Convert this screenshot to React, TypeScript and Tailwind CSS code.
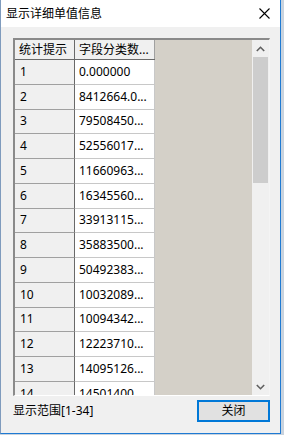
import React from "react";

const rows: [string, string][] = [
  ["1", "0.000000"],
  ["2", "8412664.0..."],
  ["3", "79508450..."],
  ["4", "52556017..."],
  ["5", "11660963..."],
  ["6", "16345560..."],
  ["7", "33913115..."],
  ["8", "35883500..."],
  ["9", "50492383..."],
  ["10", "10032089..."],
  ["11", "10094342..."],
  ["12", "12223710..."],
  ["13", "14095126..."],
  ["14", "14501400..."],
];

export default function App() {
  return (
    <div
      className="w-[284px] h-[435px] bg-[#c9d3de] overflow-hidden text-[12px] text-black"
      style={{ fontFamily: "'Noto Sans', 'Noto Sans CJK SC', sans-serif" }}
    >
      <div className="w-[281px] h-[434px] flex flex-col border-l border-l-[#7f9bbd] border-r border-r-[#1f7ad3] border-b border-b-[#1f7ad3] bg-[#f0f0f0]">
        {/* Title bar */}
        <div className="h-[27px] bg-white flex items-center justify-between pl-[5px] pr-[9px] shrink-0">
          <span className="leading-none">显示详细单值信息</span>
          <svg width="11" height="11" viewBox="0 0 11 11" className="mr-[1px]">
            <path d="M0.5 0.5 L10.5 10.5 M10.5 0.5 L0.5 10.5" stroke="#000" strokeWidth="1.1" />
          </svg>
        </div>
        {/* Body */}
        <div className="flex flex-col pl-[12px] pt-[11px]">
          <div className="w-[257px] h-[358px] flex border-t-2 border-l-2 border-t-[#8a8a8a] border-l-[#8a8a8a] border-r border-b border-r-[#f4f4f4] border-b-[#ffffff] overflow-hidden">
            {/* grid */}
            <div className="flex-1 flex bg-[#d4d0c8] overflow-hidden">
              <div className="flex flex-col w-[140px] shrink-0">
                {/* header */}
                <div className="flex h-[20px] shrink-0 border-b border-b-[#696969]">
                  <div className="w-[60px] bg-[#f0f0f0] border-r border-r-[#696969] pl-[4px] flex items-center leading-none">
                    统计提示
                  </div>
                  <div className="w-[80px] bg-[#f0f0f0] border-r border-r-[#a0a0a0] pl-[4px] flex items-center leading-none whitespace-nowrap overflow-hidden">
                    字段分类数...
                  </div>
                </div>
                {rows.map(([a, b]) => (
                  <div key={a} className="flex h-[24.75px] shrink-0">
                    <div className="w-[60px] bg-[#f0f0f0] border-r border-r-[#696969] border-b border-b-[#a0a0a0] pl-[5px] flex items-center leading-none">
                      {a}
                    </div>
                    <div className="w-[80px] bg-white border-r border-r-[#c8c8c8] border-b border-b-[#c8c8c8] pl-[4px] flex items-center leading-none whitespace-nowrap overflow-hidden">
                      {b}
                    </div>
                  </div>
                ))}
              </div>
            </div>
            {/* scrollbar */}
            <div className="w-[17px] shrink-0 bg-[#f0f0f0] flex flex-col">
              <div className="h-[17px] flex items-center justify-center">
                <svg width="9" height="6" viewBox="0 0 9 6">
                  <path d="M0.8 5 L4.5 1.3 L8.2 5" stroke="#606060" strokeWidth="1.6" fill="none" />
                </svg>
              </div>
              <div className="mx-[1px] h-[126px] bg-[#cdcdcd]" />
              <div className="flex-1" />
              <div className="h-[17px] flex items-center justify-center">
                <svg width="9" height="6" viewBox="0 0 9 6">
                  <path d="M0.8 1 L4.5 4.7 L8.2 1" stroke="#606060" strokeWidth="1.6" fill="none" />
                </svg>
              </div>
            </div>
          </div>
          {/* footer */}
          <div className="w-[257px] flex items-center justify-between mt-[4px]">
            <span className="leading-none">显示范围[1-34]</span>
            <button className="w-[73px] h-[22px] bg-[#e1e1e1] border-2 border-[#0078d7] flex items-center justify-center leading-none text-black">
              关闭
            </button>
          </div>
        </div>
      </div>
    </div>
  );
}
